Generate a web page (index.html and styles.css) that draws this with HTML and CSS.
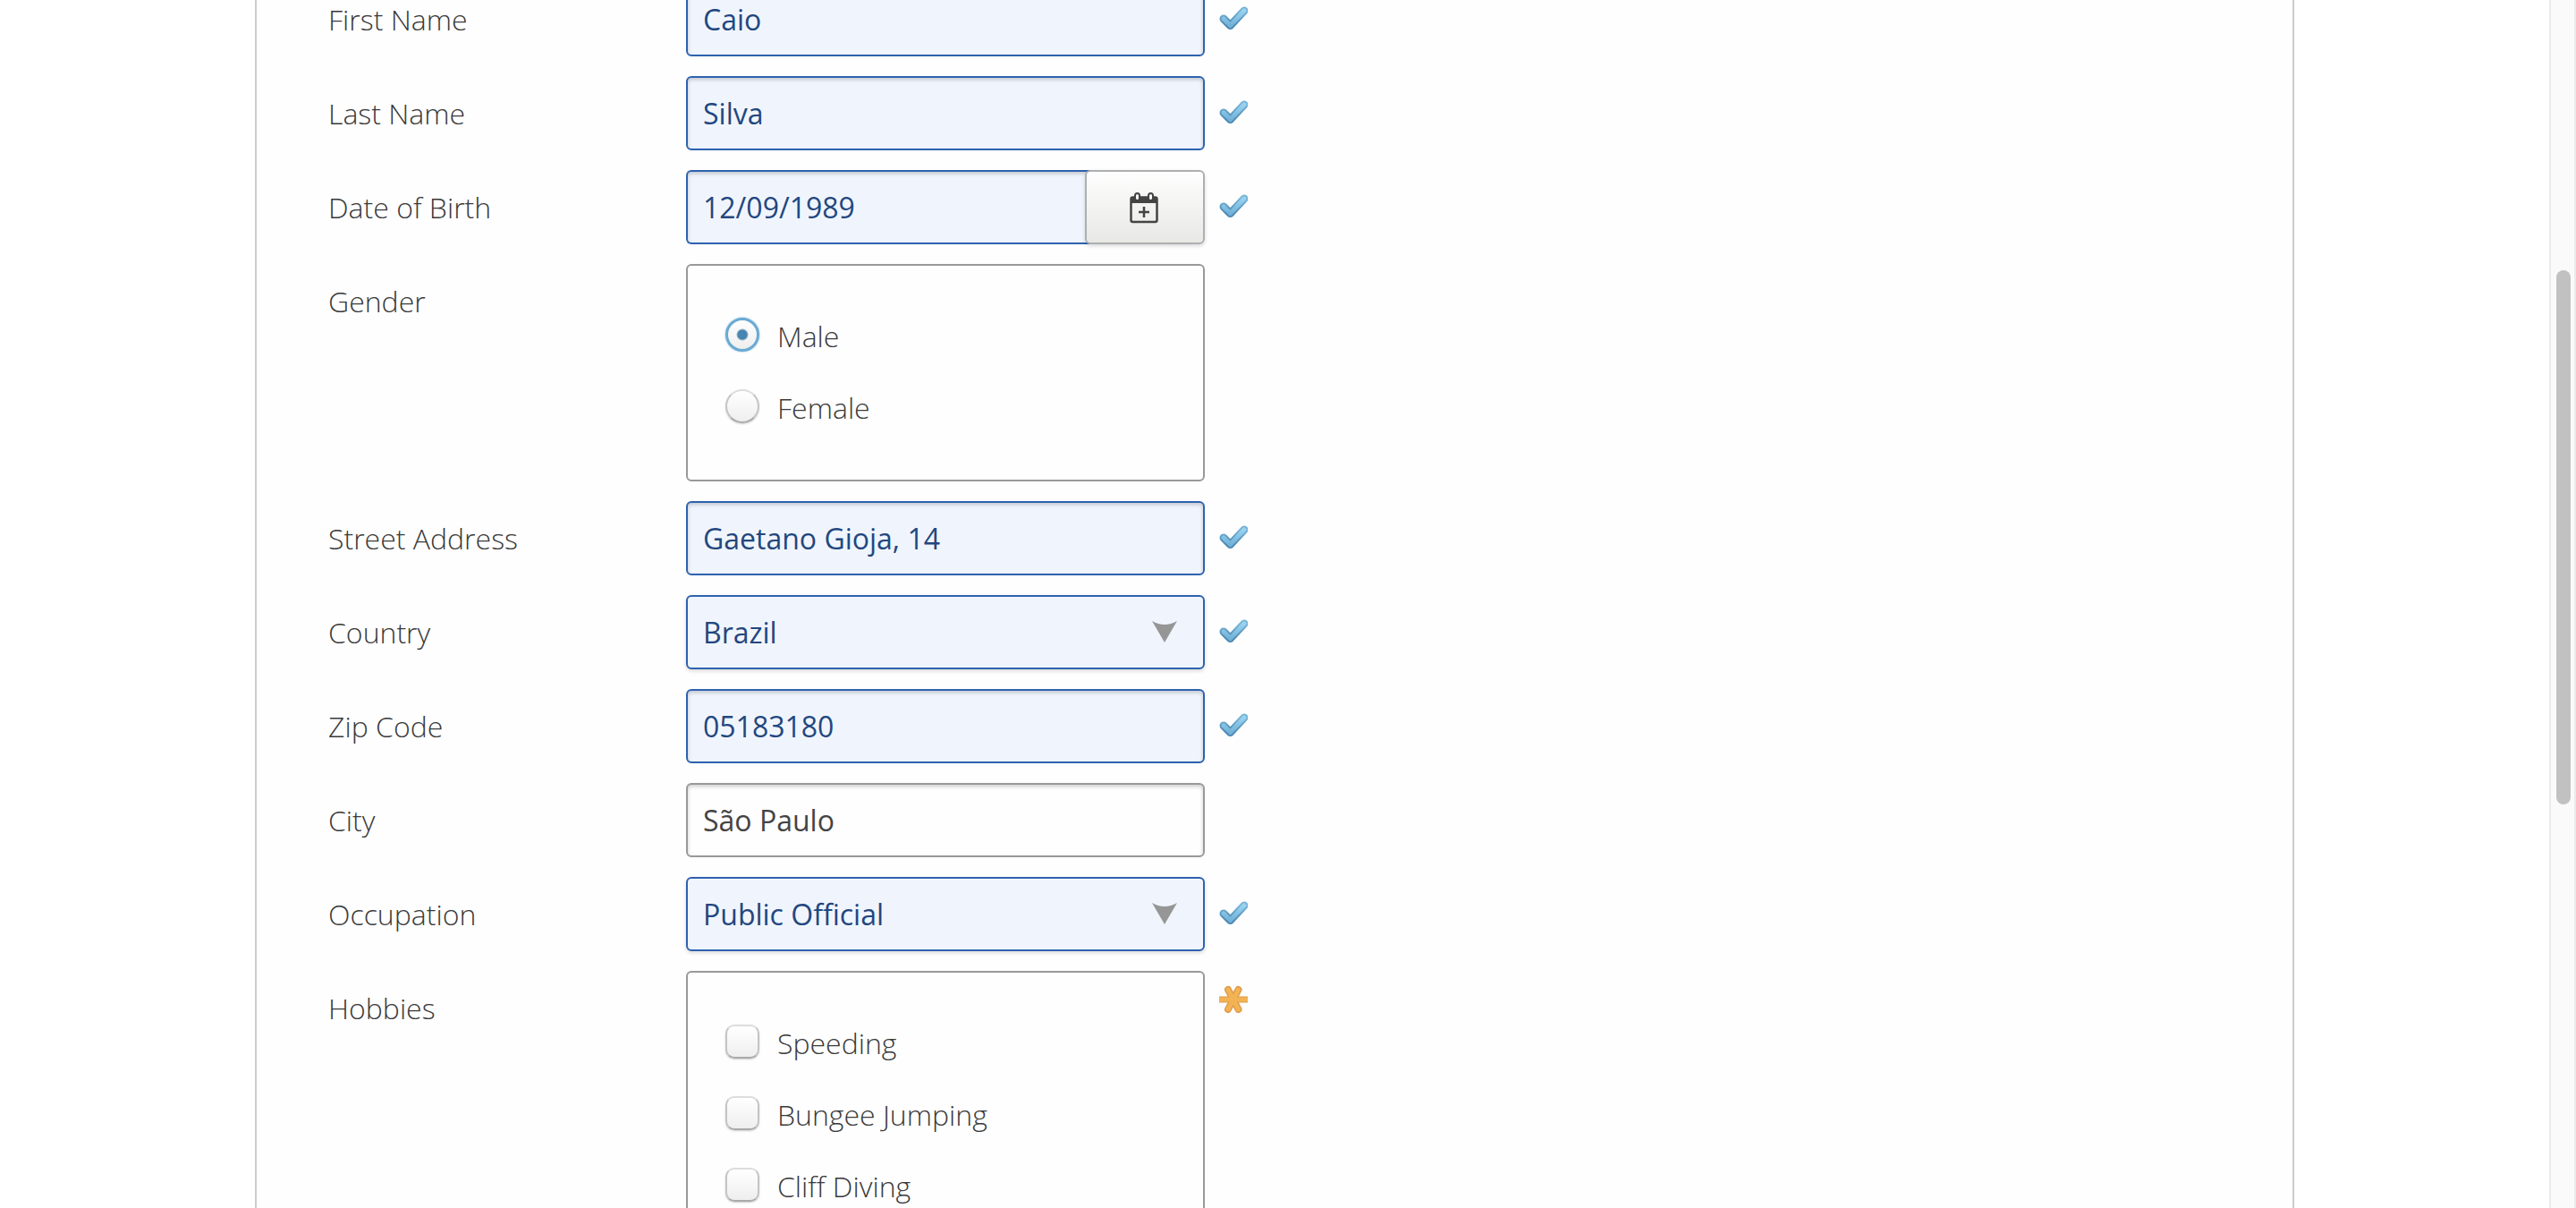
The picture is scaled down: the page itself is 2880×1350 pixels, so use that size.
FILE: index.html
```html
<!DOCTYPE html>
<html lang="en">
<head>
<meta charset="utf-8">
<title>Personal details</title>
<link rel="stylesheet" href="styles.css">
</head>
<body>
<svg class="defs" aria-hidden="true">
  <defs>
    <linearGradient id="blue" x1="0" y1="0" x2="0" y2="1">
      <stop offset="0" stop-color="#98d3f0"/>
      <stop offset="1" stop-color="#72b1d8"/>
    </linearGradient>
    <linearGradient id="blue-edge" x1="0" y1="0" x2="0" y2="1">
      <stop offset="0" stop-color="#78b3d6"/>
      <stop offset="1" stop-color="#4d89b3"/>
    </linearGradient>
    <symbol id="check" viewBox="0 0 32 32">
      <path d="M5 16 L12.500 23.500 L28 7" fill="none" stroke="url(#blue-edge)" stroke-width="9" stroke-linecap="round" stroke-linejoin="round"/>
      <path d="M5 16 L12.500 23.500 L28 7" fill="none" stroke="url(#blue)" stroke-width="5" stroke-linecap="round" stroke-linejoin="round"/>
    </symbol>
    <symbol id="star" viewBox="0 0 32 32">
      <path d="M10 5 L21.500 27 M21.500 5 L10 27" fill="none" stroke="#e09a48" stroke-width="8" stroke-linecap="round"/>
      <path d="M0 16 H32" fill="none" stroke="#e09a48" stroke-width="7"/>
      <path d="M10 5 L21.500 27 M21.500 5 L10 27 M0 16 H32" fill="none" stroke="#f2b355" stroke-width="5" stroke-linecap="round"/>
    </symbol>
  </defs>
</svg>
<div class="window">
  <main class="page">
    <form class="panel">
      <div class="row">
        <label class="name" for="first">First Name</label>
        <input class="field valid" id="first" type="text" value="Caio">
        <svg class="mark"><use href="#check"/></svg>
      </div>
      <div class="row">
        <label class="name" for="last">Last Name</label>
        <input class="field valid" id="last" type="text" value="Silva">
        <svg class="mark"><use href="#check"/></svg>
      </div>
      <div class="row">
        <label class="name" for="birth">Date of Birth</label>
        <div class="date">
          <input class="field valid" id="birth" type="text" value="12/09/1989">
          <button class="pick" type="button" aria-label="Pick a date">
            <svg class="calendar" viewBox="0 0 32 36">
              <rect x="1.500" y="6.500" width="29" height="27.500" rx="2" fill="none" stroke="#444" stroke-width="2.500"/>
              <path d="M1 13 V8 Q1 6 3 6 H29 Q31 6 31 8 V13 Z" fill="#444"/>
              <rect x="6" y="2" width="5" height="8" rx="2.500" fill="#fafafa" stroke="#444" stroke-width="2"/>
              <rect x="21" y="2" width="5" height="8" rx="2.500" fill="#fafafa" stroke="#444" stroke-width="2"/>
              <path d="M16 17 V29 M10 23 H22" fill="none" stroke="#444" stroke-width="2.500"/>
            </svg>
          </button>
        </div>
        <svg class="mark"><use href="#check"/></svg>
      </div>
      <div class="row" role="radiogroup" aria-labelledby="gender">
        <span class="name" id="gender">Gender</span>
        <div class="group">
          <label class="option"><input class="tick round" type="radio" name="gender" checked>Male</label>
          <label class="option"><input class="tick round" type="radio" name="gender">Female</label>
        </div>
      </div>
      <div class="row">
        <label class="name" for="street">Street Address</label>
        <input class="field valid" id="street" type="text" value="Gaetano Gioja, 14">
        <svg class="mark"><use href="#check"/></svg>
      </div>
      <div class="row">
        <label class="name" for="country">Country</label>
        <div class="choice">
          <select class="field valid" id="country"><option>Brazil</option></select>
          <svg class="arrow" viewBox="0 0 28 24"><path d="M0 0 Q14 8 28 0 L14 24 Z" fill="#969696"/></svg>
        </div>
        <svg class="mark"><use href="#check"/></svg>
      </div>
      <div class="row">
        <label class="name" for="zip">Zip Code</label>
        <input class="field valid" id="zip" type="text" value="05183180">
        <svg class="mark"><use href="#check"/></svg>
      </div>
      <div class="row">
        <label class="name" for="city">City</label>
        <input class="field" id="city" type="text" value="São Paulo">
      </div>
      <div class="row">
        <label class="name" for="job">Occupation</label>
        <div class="choice">
          <select class="field valid" id="job"><option>Public Official</option></select>
          <svg class="arrow" viewBox="0 0 28 24"><path d="M0 0 Q14 8 28 0 L14 24 Z" fill="#969696"/></svg>
        </div>
        <svg class="mark"><use href="#check"/></svg>
      </div>
      <div class="row" role="group" aria-labelledby="hobbies">
        <span class="name" id="hobbies">Hobbies</span>
        <div class="group">
          <label class="option"><input class="tick" type="checkbox">Speeding</label>
          <label class="option"><input class="tick" type="checkbox">Bungee Jumping</label>
          <label class="option"><input class="tick" type="checkbox">Cliff Diving</label>
        </div>
        <svg class="mark"><use href="#star"/></svg>
      </div>
    </form>
  </main>
  <div class="track"><div class="thumb"></div></div>
</div>
</body>
</html>
```
FILE: styles.css
```css
* {
  box-sizing: border-box;
}

body {
  margin: 0;
  overflow: hidden;
  background: #fff;
  color: #3a3a3a;
  font-family: "Open Sans", "Noto Sans", sans-serif;
  font-size: 32px;
  font-weight: 300;
}

.defs {
  position: absolute;
  width: 0;
  height: 0;
}

.window {
  display: flex;
  height: 100vh;
}

.page {
  flex: 1;
  min-width: 0;
  height: 100%;
  overflow: hidden;
}

/* The form is scrolled part of the way into its first row. */
.panel {
  display: flex;
  flex-direction: column;
  gap: 22px;
  width: 80%;
  margin: -20px auto 0;
  padding: 0 80px;
  border: solid #ccc;
  border-width: 0 2px;
  background: #fefefe;
}

.row {
  display: grid;
  grid-template-columns: 400px minmax(0, 580px) 48px;
  align-items: start;
}

.name {
  line-height: 83px;
}

.field {
  width: 100%;
  height: 83px;
  margin: 0;
  padding: 0 17px;
  border: 2px solid #999;
  border-radius: 6px;
  outline: none;
  appearance: none;
  background: #fefefe;
  box-shadow: inset 0 2px 4px rgba(0, 0, 0, .2);
  color: #444;
  font: inherit;
  font-weight: 400;
}

.valid {
  border-color: #2e62b0;
  background: #f0f5fd;
  color: #23477f;
}

.date {
  display: flex;
}

.date .field {
  flex: 1;
  min-width: 0;
  border-right: 0;
  border-radius: 6px 0 0 6px;
}

.pick {
  display: flex;
  align-items: center;
  justify-content: center;
  width: 134px;
  height: 83px;
  margin-left: -6px;
  padding: 0 2px 0 0;
  border: 2px solid #adafb0;
  border-radius: 6px;
  background: linear-gradient(#fefefe, #e8e8e5);
  box-shadow: 0 2px 4px rgba(0, 0, 0, .15);
}

.calendar {
  width: 32px;
  height: 36px;
}

.choice {
  position: relative;
}

.choice .field {
  display: block;
  box-shadow: 0 2px 4px rgba(0, 0, 0, .15);
}

.arrow {
  position: absolute;
  top: 29px;
  right: 31px;
  width: 28px;
  height: 24px;
  pointer-events: none;
}

.mark {
  width: 32px;
  height: 32px;
  margin: 25px 0 0 16px;
}

.group ~ .mark {
  margin-top: 16px;
}

.group {
  display: flex;
  flex-direction: column;
  padding: 38px 42px 41px;
  border: 2px solid #999;
  border-radius: 6px;
}

.option {
  display: flex;
  align-items: center;
  gap: 20px;
  height: 80px;
}

.tick {
  flex: none;
  width: 38px;
  height: 38px;
  margin: 0 0 2px;
  border: 2px solid;
  border-color: #ddd #c4c4c4 #aaa;
  border-radius: 10px;
  appearance: none;
  background: linear-gradient(#fff, #eee);
  box-shadow: 0 1px 2px rgba(0, 0, 0, .2);
}

.round {
  border-radius: 50%;
}

.round:checked {
  border: 3px solid #69aad3;
  background: radial-gradient(circle, #4885b0 0 5px, transparent 7px), linear-gradient(#fff, #eee);
  box-shadow: 0 0 2px #69aad3;
}

.track {
  width: 30px;
  height: 100%;
  padding: 302px 4px 0 6px;
  border: solid #eaeaea;
  border-width: 0 2px;
  background: #fafafa;
}

.thumb {
  width: 16px;
  height: 57%;
  border-radius: 8px;
  background: #c1c1c1;
}
```
